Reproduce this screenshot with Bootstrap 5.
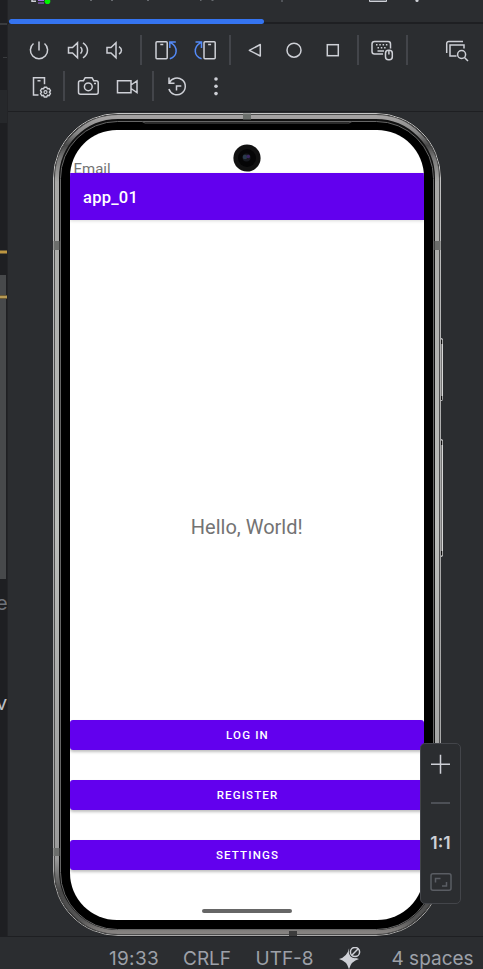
<!DOCTYPE html>
<html lang="en">
<head>
<meta charset="utf-8">
<meta name="viewport" content="width=device-width, initial-scale=1">
<title>Running Devices</title>
<link href="https://cdn.jsdelivr.net/npm/bootstrap@5.3.0/dist/css/bootstrap.min.css" rel="stylesheet">
<style>
  body{background:#2b2d30;width:483px;height:969px;overflow:hidden;font-family:Inter,"Liberation Sans",sans-serif}
  svg{display:block}
  .gutter{width:8px;height:936px;background:#1e1f22;flex:none;overflow:hidden;border-right:1px solid #232427}
  .g-line{height:2px;background:#393b3e;margin-top:23px}
  .g-tick{height:1px;margin:32px 0 0 3px;background:#393b3e}
  .g-row{height:33px;margin-top:32px;background:#26282b}
  .g-warn{height:4px;background:#bd9640;border:solid #6d5b34;border-width:1px 0}
  .g-first{margin-top:127px}
  .g-scroll{width:6px;height:304px;margin-top:21px;padding-top:20px;background:#47494b}
  .g-scroll .g-warn{width:7px;background:#b79a55}
  .g-char{font-size:20px;line-height:24px;margin:12px 0 0 -4px;color:#6f737a}
  .g-char + .g-char{margin-top:76px;color:#bcbec4}
  .tabstrip{height:24px;border-bottom:2px solid #1e1f22}
  .tab-active{left:1px;top:19px;width:255px;height:5px;border-radius:3px;background:#3574f0}
  .tools{height:88px;padding:8px 7px 0 12px;border-bottom:1px solid #1e1f22}
  .tool-row{height:36px;padding-bottom:1px}
  .tool-item{width:39px;display:flex;justify-content:center;flex:none}
  .tool-item.narrow{width:38px}
  .tool-item svg,.zoom-box svg{fill:none;stroke:#ced0d6;stroke-width:1.5;overflow:visible}
  .tool-sep{width:11px;height:30px;flex:none;background:linear-gradient(#43454a,#43454a) center/2px 100% no-repeat}
  .stage{height:824px}
  .device{width:394px;height:824px;margin-left:42px;padding:18px 0 0 20px}
  .device-frame{left:0;top:0;z-index:0}
  .screen{width:353.5px;height:790px;border-radius:47px;background:#fff;overflow:hidden;font-family:Roboto,sans-serif;z-index:1}
  .field-hint{height:43px;padding:29px 0 0 3.5px;font-size:15px;line-height:20px;color:#737373;overflow:hidden}
  .appbar{height:47px;background:#6200ee;color:#fff;padding:3px 13px 0;font-size:16.5px;font-weight:500;box-shadow:0 1px 3px rgba(0,0,0,.15);letter-spacing:.25px}
  .greeting{height:500px;padding-top:113px;font-size:20px;color:#737373}
  .app-btn{height:30px;background:#6200ee;color:#fff;border:0;border-radius:3px;padding:0 0 0 1.5px;margin-bottom:30px;font-size:11.5px;line-height:30px;font-weight:500;letter-spacing:1.15px;box-shadow:0 2px 3px rgba(0,0,0,.25)}
  .app-btn:hover{background:#6200ee;color:#fff}
  .home-pill{width:90px;height:4px;border-radius:2px;background:#666;margin:39px 0 0 132px}
  .app-btn:nth-last-child(2){margin-bottom:0}
  .camera{left:183px;top:32px;z-index:2}
  .zoom-box{left:412px;top:631px;width:41px;height:161px;padding-top:10px;border:1px solid #43454a;border-radius:5px;background:#2b2d30;z-index:3}
  .zoom-minus{margin:28px 0 29px}
  .zoom-label{font-size:17.5px;font-weight:600;line-height:20px;color:#ced0d6;margin-bottom:20px}
  .statusbar{height:33px;border-top:1px solid #1e1f22;color:#9da0a8;font-size:19px;line-height:24px;padding:10px 9px 0 109px;white-space:nowrap}
  .st-time{width:74px;letter-spacing:.3px}.st-eol{width:72.5px}.st-enc{width:83px}.st-ai{width:53px}
</style>
<script src="https://cdn.jsdelivr.net/npm/bootstrap@5.3.0/dist/js/bootstrap.bundle.min.js"></script>
</head>
<body>
<div class="d-flex">
  <aside class="gutter">
    <div class="g-line"></div><div class="g-tick"></div><div class="g-row"></div>
    <div class="g-warn g-first"></div>
    <div class="g-scroll"><div class="g-warn"></div></div>
    <div class="g-char">e</div>
    <div class="g-char">v</div>
  </aside>
  <main class="flex-grow-1">
    <div class="tabstrip position-relative">
      <svg width="475" height="8" viewBox="8 0 475 8" fill="none">
        <path d="M32 0v1.3h4" stroke="#ced0d6" stroke-width="1.5"/>
        <path d="M38 .5h6M38 3h6" stroke="#a571e6" stroke-width="1"/>
        <circle cx="47.5" cy="1.3" r="2.8" fill="#00f500"/>
        <path d="M90 .3h2M111 .3h2M147 .3h2M200 .3h1.5M211.500 .3h2M282 0v2" stroke="#777a80"/>
        <path d="M369.500 0v1.500h17V0" fill="#6f737a" stroke="#ced0d6"/>
        <circle cx="417" cy=".5" r="1.6" fill="#ced0d6"/>
      </svg>
      <div class="tab-active position-absolute"></div>
    </div>
    <div class="tools">
      <div class="tool-row d-flex align-items-center">
        <div class="tool-item narrow"><svg width="24" height="24"><path d="M12 3.500v9M6.500 5.500a8.600 8.600 0 1 0 11 0"/></svg></div>
        <div class="tool-item"><svg width="24" height="24"><path d="M2.500 9.500h4l5-4.800v15l-5-4.700h-4zM14.500 9c2 1.800 2 4.800 0 6.600M17 4.800c6 4 6 11 0 15"/></svg></div>
        <div class="tool-item narrow"><svg width="24" height="24"><path d="M3 9.500h4l5-4.800v15L7 15H3zM15 8.600c3.300 2 3.300 5.400 0 7.400"/></svg></div>
        <div class="tool-sep"></div>
        <div class="tool-item"><svg width="24" height="24"><rect x="2" y="3.700" width="11.200" height="17" rx="1"/><path d="M6.300 6.500h3"/><path d="M15.800 20.700c8-2.500 8.500-11.500 1-16M21.800 4h-6v6" stroke="#548af7"/></svg></div>
        <div class="tool-item"><svg width="24" height="24"><rect x="11" y="3.700" width="11.200" height="17" rx="1"/><path d="M15.100 6.500h3"/><path d="M8.600 20.700c-8-2.500-8.500-11.500-1-16M2.500 4h6v6" stroke="#548af7"/></svg></div>
        <div class="tool-sep"></div>
        <div class="tool-item"><svg width="24" height="24"><path d="M17.300 6.500v11.500L6.300 12.300z" stroke-linejoin="round"/></svg></div>
        <div class="tool-item"><svg width="24" height="24"><circle cx="12" cy="12.200" r="7"/></svg></div>
        <div class="tool-item"><svg width="24" height="24"><rect x="6.300" y="6.700" width="11" height="11"/></svg></div>
        <div class="tool-sep"></div>
        <div class="tool-item narrow"><svg width="24" height="24"><path d="M13 16H4.500a2.500 2.500 0 0 1-2.500-2.500V6a2.500 2.500 0 0 1 2.500-2.500H18A2.500 2.500 0 0 1 20.500 6v4.500"/><path d="M6 6.800h12M7.500 9.800h9" stroke-dasharray="1.5 1.800"/><path d="M7.500 13H14"/><rect x="15.500" y="12.200" width="6.800" height="9.500" rx="3"/><path d="M18.900 12.500v4"/></svg></div>
        <div class="tool-sep"></div>
        <div class="tool-item ms-auto"><svg width="24" height="24"><path d="M1.700 15V5.500a2 2 0 0 1 2-2H18M11.500 18H5V7h14v3.500"/><circle cx="16.600" cy="16.500" r="4"/><path d="M19.500 19.500l3.500 3.500"/></svg></div>
      </div>
      <div class="tool-row d-flex align-items-center">
        <div class="tool-item narrow"><svg width="24" height="24"><path d="M11.500 21H6.500V3.700h11v6.500M10.500 6.800h3"/><path d="M17.200 13.200h2.600l.6 1.700 1.800-.4 1.300 2.200-1.200 1.400 1.200 1.400-1.300 2.200-1.800-.4-.6 1.700h-2.600l-.6-1.700-1.800.4-1.300-2.200 1.200-1.400-1.200-1.400 1.300-2.200 1.800.4z" stroke-width="1.400" stroke-linejoin="round"/><circle cx="18.500" cy="18.100" r="1.500" stroke-width="1.200"/></svg></div>
        <div class="tool-sep"></div>
        <div class="tool-item"><svg width="24" height="24"><path d="M3.500 6.700h3l1.700-3H15l1.700 3h2.500q2 0 2 2v9.500q0 2-2 2H3.500q-2 0-2-2V8.700q0-2 2-2z"/><circle cx="11.300" cy="12.800" r="3.900"/><path d="M17 9.500h2"/></svg></div>
        <div class="tool-item"><svg width="24" height="24"><path d="M1.500 6.700H15v12H1.500zM15 11l6-4v11.500l-6-4"/></svg></div>
        <div class="tool-sep"></div>
        <div class="tool-item narrow"><svg width="24" height="24"><path d="M4 3.500v5.800h5.500M4.200 9a8.400 8.400 0 1 1-.3 6M11.500 16.500v-4.500h4.800"/></svg></div>
        <div class="tool-item"><svg width="24" height="24"><g fill="#ced0d6" stroke="none"><circle cx="12" cy="5" r="1.800"/><circle cx="12" cy="12.300" r="1.800"/><circle cx="12" cy="19.600" r="1.800"/></g></svg></div>
      </div>
    </div>
    <div class="stage position-relative">
      <div class="device position-relative">
        <svg class="device-frame position-absolute" width="394" height="824" viewBox="50 112 394 824" fill="none">
          <defs><linearGradient id="metal" x1="0" y1="0" x2="0" y2="1">
            <stop offset="0" stop-color="#a4a2a2"/><stop offset=".02" stop-color="#858585"/><stop offset=".035" stop-color="#484848"/><stop offset=".05" stop-color="#777"/><stop offset=".08" stop-color="#a8a8a6"/><stop offset=".5" stop-color="#bcbebb"/><stop offset=".91" stop-color="#9a9a9a"/><stop offset=".95" stop-color="#484848"/><stop offset=".985" stop-color="#555"/><stop offset="1" stop-color="#858280"/>
          </linearGradient>
          <linearGradient id="rim" x1="0" y1="0" x2="0" y2="1">
            <stop offset="0" stop-color="#c4c4c4"/><stop offset=".5" stop-color="#a8a8a8"/><stop offset="1" stop-color="#aaa"/>
          </linearGradient></defs>
          <g fill="#777" stroke="#d6d6d6"><rect x="439.500" y="338.500" width="3" height="62" rx="1"/><rect x="439.500" y="439.500" width="3" height="117" rx="1"/></g>
          <path d="M441.500 340v4M441.500 396v4M441.500 441v4M441.500 551v4" stroke="#111" stroke-width="1.500"/>
          <rect x="53" y="113" width="388" height="823" rx="65" fill="#111"/>
          <rect x="53.500" y="113.500" width="387" height="822" rx="64.500" stroke="url(#rim)"/>
          <rect x="54.500" y="114.500" width="385" height="820" rx="63.500" stroke="#4d4d4d"/>
          <rect x="57" y="117" width="380" height="815" rx="61" stroke="url(#metal)" stroke-width="4"/>
          <rect x="60.500" y="121.500" width="373" height="808" rx="57" fill="#000" stroke="#666"/>
          <path d="M142 121.500l3 1.500h204l3-1.500" stroke="#555"/>
          <path d="M243 116.500h8" stroke="#6b6f6c" stroke-width="6"/>
          <path d="M289 933.500h8" stroke="#3c3c3c" stroke-width="5"/>
          <path d="M56.500 241v9M437.500 241v9M56.500 848v8" stroke="#6c6e6c" stroke-width="6"/>
        </svg>
        <div class="screen position-relative">
          <div class="field-hint">Email</div>
          <div class="appbar d-flex align-items-center position-relative">app_01</div>
          <div class="greeting d-flex align-items-center justify-content-center">Hello, World!</div>
          <button class="app-btn btn d-block w-100">LOG IN</button>
          <button class="app-btn btn d-block w-100">REGISTER</button>
          <button class="app-btn btn d-block w-100">SETTINGS</button>
          <div class="home-pill"></div>
        </div>
        <svg class="camera position-absolute" width="28" height="28"><circle cx="14" cy="14" r="13.600" fill="#111"/><circle cx="14" cy="14" r="9" fill="#050506"/><circle cx="13.500" cy="13.500" r="4" fill="#17191f"/><circle cx="12" cy="13" r="2.300" fill="#293a4b"/><circle cx="15.300" cy="12.500" r="1.800" fill="#3b2562"/></svg>
      </div>
      <div class="zoom-box position-absolute d-flex flex-column align-items-center">
        <svg width="20" height="20"><path d="M9.500 .8v19M0 10.300h19"/></svg>
        <svg class="zoom-minus" width="20" height="2"><path d="M0 1h19" stroke="#5a5d63"/></svg>
        <div class="zoom-label">1:1</div>
        <svg width="22" height="18"><g stroke="#5a5d63"><rect x="1" y=".8" width="20" height="16.500" rx="2"/><path d="M5.500 9.500V5.500h5M12 13h4.500V9"/></g></svg>
      </div>
    </div>
  </main>
</div>
<footer class="statusbar d-flex">
  <span class="st-time">19:33</span><span class="st-eol">CRLF</span><span class="st-enc">UTF-8</span>
  <span class="st-ai"><svg width="24" height="24" viewBox="0 0 24 24" fill="none"><path d="M10 1.500q1.800 8.300 10 10.500-8.200 2.200-10 10.500Q8.200 14.200 0 12 8.200 9.800 10 1.500z" fill="#ced0d6"/><circle cx="16" cy="5" r="6.200" fill="#2b2d30"/><circle cx="16" cy="5" r="4.600" stroke="#ced0d6" stroke-width="1.500"/><path d="M12.800 8.200l6.400-6.400" stroke="#ced0d6" stroke-width="1.500"/></svg></span>
  <span>4 spaces</span>
</footer>
</body>
</html>
